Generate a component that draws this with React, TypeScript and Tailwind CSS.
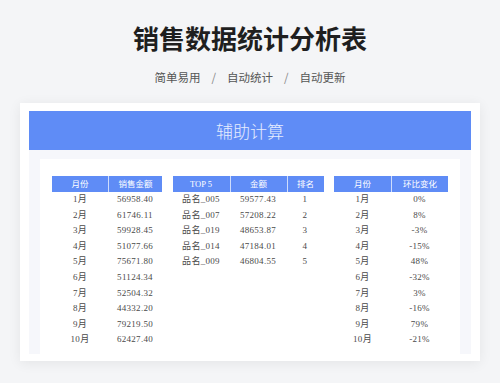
import React from 'react';

const months = ['1月', '2月', '3月', '4月', '5月', '6月', '7月', '8月', '9月', '10月'];
const sales = ['56958.40', '61746.11', '59928.45', '51077.66', '75671.80', '51124.34', '52504.32', '44332.20', '79219.50', '62427.40'];
const top5 = [
  ['品名_005', '59577.43', '1'],
  ['品名_007', '57208.22', '2'],
  ['品名_019', '48653.87', '3'],
  ['品名_014', '47184.01', '4'],
  ['品名_009', '46804.55', '5'],
];
const change = ['0%', '8%', '-3%', '-15%', '48%', '-32%', '3%', '-16%', '79%', '-21%'];

const tableFont = { fontFamily: '"Liberation Serif", "Noto Sans CJK SC", serif' };

function DataTable({ widths, headers, rows }: { widths: string[]; headers: string[]; rows: string[][] }) {
  return (
    <div className="flex flex-col" style={tableFont}>
      {/* Header */}
      <div className="flex h-[16px] bg-[#5f8cf6] text-white text-[8.5px]">
        {headers.map((h, i) => (
          <div
            key={h}
            className={`${widths[i]} flex items-center justify-center ${i > 0 ? 'border-l border-white/70' : ''}`}
          >
            {h}
          </div>
        ))}
      </div>
      {rows.map((row, r) => (
        <div key={r} className="flex h-[15.6px] text-[9px] tracking-[0.3px] text-[#4a4a4a]">
          {row.map((cell, i) => (
            <div key={i} className={`${widths[i]} flex items-center justify-center`}>
              {cell}
            </div>
          ))}
        </div>
      ))}
    </div>
  );
}

export default function App() {
  return (
    <div
      className="w-[500px] h-[383px] bg-[#f4f5f7] overflow-hidden flex flex-col items-center"
      style={{ fontFamily: '"Noto Sans CJK SC", sans-serif' }}
    >
      {/* Title */}
      <h1 className="mt-[25px] text-[26px] leading-[26px] font-bold text-[#1f1f1f]">销售数据统计分析表</h1>
      <div className="mt-[20px] flex items-center text-[11.5px] leading-[12px] text-[#555]">
        <span>简单易用</span>
        <span className="mx-[11px] text-[#888]">/</span>
        <span>自动统计</span>
        <span className="mx-[11px] text-[#888]">/</span>
        <span>自动更新</span>
      </div>

      {/* Card */}
      <div className="mt-[20px] w-[460px] bg-white px-[9px] pt-[8px] pb-[7px] shadow-[0_2px_12px_rgba(0,0,0,0.07)]">
        <div className="h-[39px] bg-[#5f8cf6] flex items-center justify-center pt-[4px]">
          <span className="text-[17px] text-white/85 font-light" style={tableFont}>
            辅助计算
          </span>
        </div>
        <div className="bg-[#f6f7fb] px-[11px] pt-[9px]">
          <div className="bg-white h-[195px] px-[12px] pt-[17px] flex justify-between items-start">
            <DataTable
              widths={['w-[56px]', 'w-[54px]']}
              headers={['月份', '销售金额']}
              rows={months.map((m, i) => [m, sales[i]])}
            />
            <DataTable
              widths={['w-[57px]', 'w-[57px]', 'w-[37px]']}
              headers={['TOP 5', '金额', '排名']}
              rows={top5}
            />
            <DataTable
              widths={['w-[57px]', 'w-[57px]']}
              headers={['月份', '环比变化']}
              rows={months.map((m, i) => [m, change[i]])}
            />
          </div>
        </div>
      </div>
    </div>
  );
}
